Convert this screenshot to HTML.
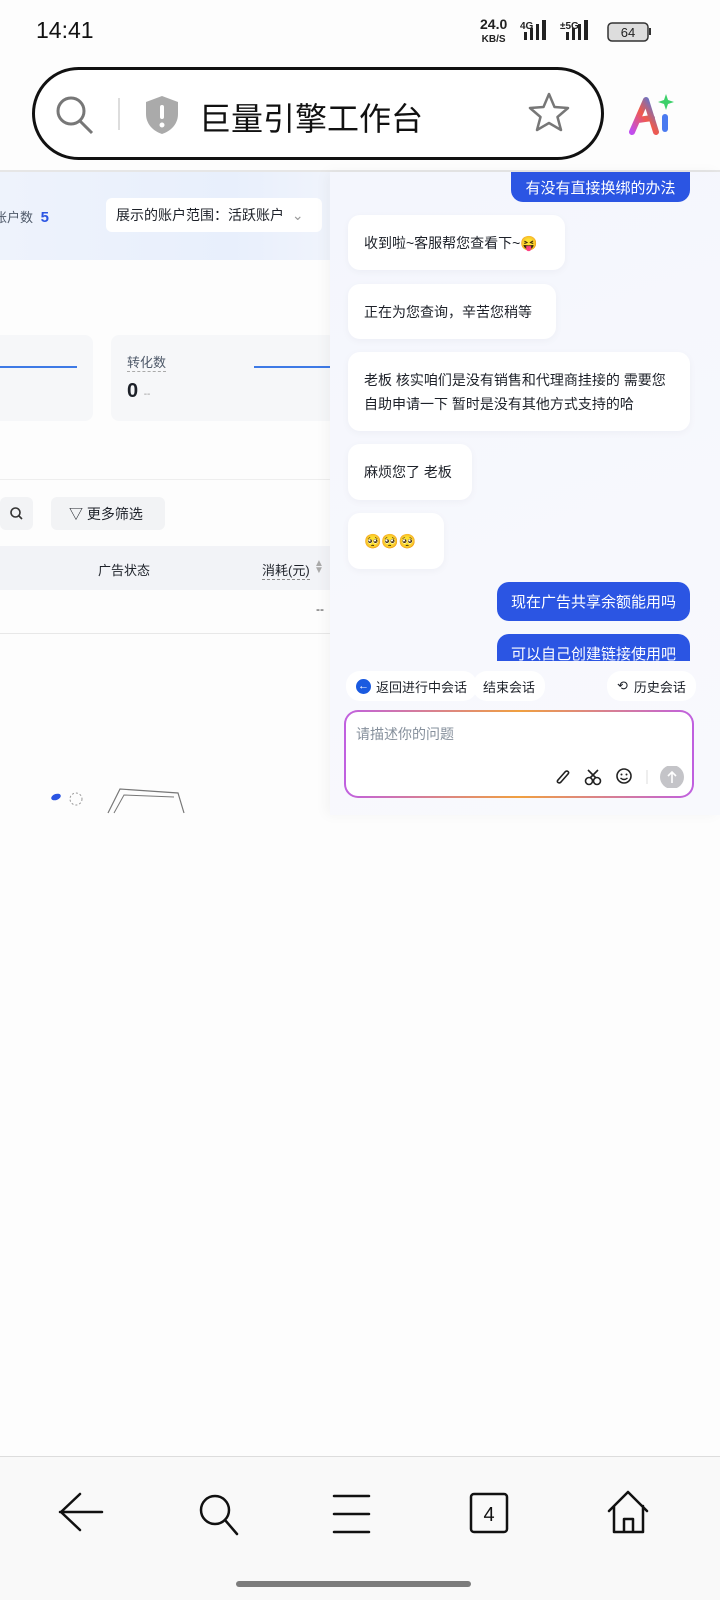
<!DOCTYPE html>
<html><head><meta charset="utf-8"><style>
*{margin:0;padding:0;box-sizing:border-box}
body{width:720px;height:1600px;background:#fdfdfd;font-family:"Liberation Sans","Noto Sans CJK SC",sans-serif;position:relative;overflow:hidden;color:#1d2129}
.a{position:absolute}
.b{position:absolute;background:#fff;border-radius:12px;font-size:14px;color:#1d2129;padding:0 16px;display:flex;align-items:center;line-height:24px;box-shadow:0 2px 8px rgba(0,0,50,.04)}
.u{position:absolute;background:#2b55e3;color:#fff;border-radius:12px;font-size:15px;display:flex;align-items:center;justify-content:center}
.pill{position:absolute;background:#fff;border-radius:14px;font-size:13px;color:#1d2129;height:30px;display:flex;align-items:center;padding:0 10px}
</style></head><body>
<!-- status bar -->
<div class="a" style="left:36px;top:17px;font-size:23px;color:#111">14:41</div>
<div class="a" style="left:480px;top:18px;font-size:14px;font-weight:bold;line-height:13px;text-align:center;color:#222">24.0<br><span style="font-size:10px">KB/S</span></div>
<svg class="a" style="left:520px;top:18px" width="136" height="26">
<text x="0" y="11" font-size="10" font-weight="bold" fill="#222" font-family="Liberation Sans">4G</text>
<rect x="4" y="14" width="3" height="8" fill="#222"/><rect x="10" y="10" width="3" height="12" fill="#222"/><rect x="16" y="6" width="3" height="16" fill="#222"/><rect x="22" y="2" width="4" height="20" fill="#222"/>
<text x="40" y="11" font-size="10" font-weight="bold" fill="#222" font-family="Liberation Sans">±5G</text>
<rect x="46" y="14" width="3" height="8" fill="#222"/><rect x="52" y="10" width="3" height="12" fill="#222"/><rect x="58" y="6" width="3" height="16" fill="#222"/><rect x="64" y="2" width="4" height="20" fill="#222"/>
<rect x="88" y="5" width="40" height="18" rx="4" fill="#ddd" stroke="#333" stroke-width="1.5"/><rect x="129" y="10" width="2" height="7" fill="#333"/>
<text x="108" y="19" font-size="13" text-anchor="middle" fill="#222" font-family="Liberation Sans">64</text>
</svg>
<!-- url bar -->
<div class="a" style="left:32px;top:67px;width:572px;height:93px;border:3px solid #111;border-radius:47px;background:#fff"></div>
<svg class="a" style="left:52px;top:92px" width="48" height="44"><circle cx="19" cy="19" r="13" fill="none" stroke="#777" stroke-width="3"/><line x1="28" y1="29" x2="40" y2="41" stroke="#777" stroke-width="3"/></svg>
<div class="a" style="left:118px;top:98px;width:2px;height:32px;background:#ddd"></div>
<svg class="a" style="left:143px;top:94px" width="40" height="42"><path d="M19 2 L35 8 V20 C35 30 28 37 19 40 C10 37 3 30 3 20 V8 Z" fill="#aaa"/><rect x="17" y="11" width="4" height="14" rx="2" fill="#fff"/><circle cx="19" cy="31" r="2.5" fill="#fff"/></svg>
<div class="a" style="left:199px;top:94px;font-size:32px;color:#111">巨量引擎工作台</div>
<svg class="a" style="left:526px;top:90px" width="46" height="46"><path d="M23 4 L28.5 17 L42 18 L31.5 27 L35 40 L23 33 L11 40 L14.5 27 L4 18 L17.5 17 Z" fill="none" stroke="#777" stroke-width="2.5" stroke-linejoin="round"/></svg>
<svg class="a" style="left:626px;top:92px" width="48" height="46"><defs><linearGradient id="g" x1="0" y1="1" x2="1" y2="0"><stop offset="0" stop-color="#c04df0"/><stop offset=".5" stop-color="#f05a4a"/><stop offset="1" stop-color="#3a7cf0"/></linearGradient></defs><path d="M6 40 L20 8 L30 40 M12 28 L26 26" fill="none" stroke="url(#g)" stroke-width="6" stroke-linejoin="round" stroke-linecap="round"/><path d="M40 2 L42 8 L48 10 L42 12 L40 18 L38 12 L32 10 L38 8Z" fill="#3cd06a"/><rect x="36" y="22" width="6" height="18" rx="3" fill="#4a7af0"/></svg>
<div class="a" style="left:0;top:170px;width:720px;height:2px;background:#e6e6e6"></div>
<!-- left page -->
<div class="a" style="left:0;top:172px;width:330px;height:88px;background:linear-gradient(90deg,#eef3fc,#e8effc 70%,#f0f4fc)"></div>
<div class="a" style="left:-6px;top:207px;font-size:13px;color:#4e5969">账户数 <span style="color:#2b55e3;font-size:15px;font-weight:bold;margin-left:4px">5</span></div>
<div class="a" style="left:106px;top:198px;width:216px;height:34px;background:#fff;border-radius:6px;font-size:14px;color:#1d2129;padding:7px 10px">展示的账户范围：活跃账户 <span style="color:#999;margin-left:4px">⌄</span></div>
<div class="a" style="left:-10px;top:335px;width:103px;height:86px;background:#f6f7f9;border-radius:8px"></div>
<div class="a" style="left:0;top:366px;width:77px;height:2px;background:#3e7ae6"></div>
<div class="a" style="left:111px;top:335px;width:225px;height:86px;background:#f6f7f9;border-radius:8px"></div>
<div class="a" style="left:254px;top:366px;width:76px;height:2px;background:#3e7ae6"></div>
<div class="a" style="left:127px;top:352px;font-size:13px;color:#4e5969;border-bottom:1px dashed #aaa">转化数</div>
<div class="a" style="left:127px;top:380px;font-size:20px;font-weight:bold;color:#1d2129">0 <span style="font-size:10px;color:#999;font-weight:normal">--</span></div>
<div class="a" style="left:0;top:479px;width:330px;height:1px;background:#eee"></div>
<div class="a" style="left:0;top:497px;width:33px;height:33px;background:#f2f3f5;border-radius:6px"></div>
<svg class="a" style="left:9px;top:506px" width="15" height="15"><circle cx="6.5" cy="6.5" r="4.5" fill="none" stroke="#333" stroke-width="1.6"/><line x1="10" y1="10" x2="13" y2="13" stroke="#333" stroke-width="1.6"/></svg>
<div class="a" style="left:51px;top:497px;width:114px;height:33px;background:#f2f3f5;border-radius:6px;font-size:14px;color:#1d2129;padding:7px 0 0 18px">▽ 更多筛选</div>
<div class="a" style="left:0;top:546px;width:330px;height:44px;background:#f2f3f7"></div>
<div class="a" style="left:98px;top:560px;font-size:13px;color:#1d2129">广告状态</div>
<div class="a" style="left:262px;top:560px;font-size:13px;color:#1d2129;border-bottom:1px dashed #888">消耗(元)</div>
<div class="a" style="left:314px;top:560px;font-size:10px;color:#aaa;line-height:7px">▲<br>▼</div>
<div class="a" style="left:316px;top:602px;font-size:12px;color:#333">--</div>
<div class="a" style="left:0;top:633px;width:330px;height:1px;background:#e8e8e8"></div>
<svg class="a" style="left:48px;top:783px" width="140" height="32"><ellipse cx="8" cy="14" rx="5" ry="3" fill="#2b55e3" transform="rotate(-20 8 14)"/><circle cx="28" cy="16" r="6" fill="none" stroke="#999" stroke-dasharray="2 2"/><path d="M60 30 L72 6 L130 10 L136 30" fill="none" stroke="#777" stroke-width="1.2"/><path d="M66 30 L76 12 L126 14" fill="none" stroke="#777"/></svg>
<!-- chat panel -->
<div class="a" style="left:330px;top:172px;width:390px;height:643px;background:linear-gradient(160deg,#f4f6fd,#f7f8fd 60%,#f8f9fd);box-shadow:-4px 0 12px rgba(0,0,0,.04)"></div>
<div class="u" style="left:511px;top:172px;width:179px;height:30px;border-radius:0 0 12px 12px">有没有直接换绑的办法</div>
<div class="b" style="left:348px;top:215px;width:217px;height:55px">收到啦~客服帮您查看下~😝</div>
<div class="b" style="left:348px;top:284px;width:208px;height:55px">正在为您查询，辛苦您稍等</div>
<div class="b" style="left:348px;top:352px;width:342px;height:79px">老板 核实咱们是没有销售和代理商挂接的 需要您自助申请一下 暂时是没有其他方式支持的哈</div>
<div class="b" style="left:348px;top:444px;width:124px;height:56px">麻烦您了 老板</div>
<div class="b" style="left:348px;top:513px;width:96px;height:56px">🥺🥺🥺</div>
<div class="u" style="left:497px;top:582px;width:193px;height:39px">现在广告共享余额能用吗</div>
<div class="a" style="left:330px;top:634px;width:390px;height:27px;overflow:hidden"><div class="u" style="left:167px;top:0;width:193px;height:39px">可以自己创建链接使用吧</div></div>
<div class="pill" style="left:346px;top:671px"><span style="display:inline-block;width:15px;height:15px;border-radius:50%;background:#1a5ae0;color:#fff;font-size:11px;line-height:15px;text-align:center;margin-right:5px">←</span>返回进行中会话</div>
<div class="pill" style="left:473px;top:671px">结束会话</div>
<div class="pill" style="left:607px;top:671px"><span style="margin-right:6px">⟲</span>历史会话</div>
<div class="a" style="left:344px;top:710px;width:350px;height:88px;border-radius:14px;padding:2px;background:linear-gradient(90deg,#c060e0,#f0a040 50%,#c060e0)"><div style="width:100%;height:100%;background:#fff;border-radius:12px;font-size:14px;color:#86909c;padding:12px 10px">请描述你的问题</div></div>
<svg class="a" style="left:552px;top:766px" width="134" height="22"><path d="M6 14 L13 6 C15 4 18 6 16 8 L9 16 C7 18 4 16 6 14 Z" fill="none" stroke="#222" stroke-width="1.6"/><circle cx="37" cy="15" r="3.5" fill="none" stroke="#222" stroke-width="1.6"/><circle cx="45" cy="15" r="3.5" fill="none" stroke="#222" stroke-width="1.6"/><path d="M36 4 L44 12 M46 4 L38 12" stroke="#222" stroke-width="1.6"/><circle cx="72" cy="10" r="7" fill="none" stroke="#222" stroke-width="1.6"/><circle cx="69.5" cy="8.5" r="1" fill="#222"/><circle cx="74.5" cy="8.5" r="1" fill="#222"/><path d="M68.5 12 Q72 15 75.5 12" fill="none" stroke="#222" stroke-width="1.4"/><line x1="95" y1="4" x2="95" y2="18" stroke="#ddd"/><circle cx="120" cy="11" r="12" fill="#c4c4c8"/><path d="M120 17 V6 M116 10 L120 6 L124 10" stroke="#fff" stroke-width="1.6" fill="none"/></svg>
<!-- bottom nav -->
<div class="a" style="left:0;top:1456px;width:720px;height:144px;background:#f9f9f9;border-top:1px solid #ddd"></div>
<svg class="a" style="left:0;top:1486px" width="720" height="60">
<g fill="none" stroke="#111" stroke-width="2.5" stroke-linecap="round" stroke-linejoin="round">
<path d="M60 26 H102 M80 8 L61 26 L80 44"/>
<circle cx="215" cy="24" r="14"/><line x1="225" y1="34" x2="237" y2="48"/>
<path d="M334 10 H369 M334 28 H369 M334 46 H369"/>
<rect x="471" y="8" width="36" height="38" rx="3"/>
<path d="M609 25 L628 6 L647 25 M614 20 V46 H643 V20 M624 46 V33 H633 V46"/>
</g>
<text x="489" y="35" font-size="20" text-anchor="middle" fill="#111" font-family="Liberation Sans">4</text>
</svg>
<div class="a" style="left:236px;top:1581px;width:235px;height:6px;border-radius:3px;background:#7c7c7c"></div>
</body></html>
